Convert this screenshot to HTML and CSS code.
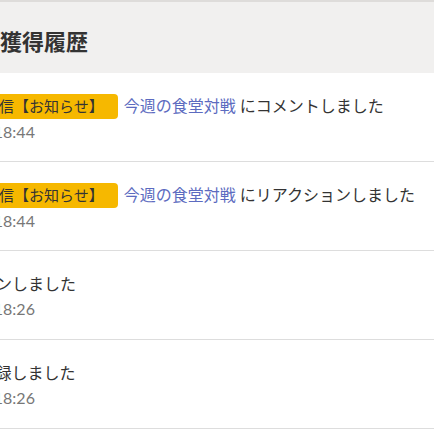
FILE: index.html
```html
<!DOCTYPE html>
<html lang="ja">
<head>
<meta charset="utf-8">
<title>獲得履歴</title>
<link rel="stylesheet" href="styles.css">
</head>
<body>
<div class="page">
  <header class="head">
    <h1 class="title">ポイント獲得履歴</h1>
  </header>
  <ul class="list">
    <li class="row">
      <div class="line"><span class="badge">運営から配信【お知らせ】</span><a class="link" href="#">今週の食堂対戦</a> にコメントしました</div>
      <div class="time">2024/06/14 18:44</div>
    </li>
    <li class="row">
      <div class="line"><span class="badge">運営から配信【お知らせ】</span><a class="link" href="#">今週の食堂対戦</a> にリアクションしました</div>
      <div class="time">2024/06/14 18:44</div>
    </li>
    <li class="row">
      <div class="line">初回ログインしました</div>
      <div class="time">2024/06/14 18:26</div>
    </li>
    <li class="row">
      <div class="line">チームに登録しました</div>
      <div class="time">2024/06/14 18:26</div>
    </li>
  </ul>
</div>
</body>
</html>
```
FILE: styles.css
```css
html, body {
  margin: 0;
  padding: 0;
  background: #ffffff;
  overflow: hidden;
}
body {
  font-family: Lato, "Noto Sans CJK JP", sans-serif;
  color: #333333;
}
.page {
  width: 600px;
  margin-left: -86px;
}
.head {
  height: 71px;
  border-top: 2px solid #dedcda;
  background: #f1f0ef;
  display: flex;
  align-items: center;
}
.title {
  margin: 0 0 0 -2px;
  font-family: "Noto Sans CJK JP", sans-serif;
  font-size: 22px;
  font-weight: 700;
  line-height: 30px;
  color: #333333;
  padding-top: 4px;
}
.list {
  list-style: none;
  margin: 0;
  padding: 0;
}
.row {
  border-bottom: 1px solid #dddddd;
  padding-top: 20px;
  height: 68px;
}
.line {
  font-size: 16px;
  line-height: 25px;
  white-space: nowrap;
  color: #333333;
  padding-left: 2px;
}
.badge {
  display: inline-block;
  background: #f6b800;
  color: #333333;
  font-size: 15px;
  line-height: 25px;
  padding: 0 14px 0 10px;
  margin-left: -2px;
  border-radius: 4px;
  margin-right: 6px;
}
.link {
  color: #5c6bc0;
  text-decoration: none;
}
.time {
  margin-top: 1px;
  margin-left: -13px;
  font-size: 16px;
  line-height: 24px;
  color: #777777;
  white-space: nowrap;
}
```
